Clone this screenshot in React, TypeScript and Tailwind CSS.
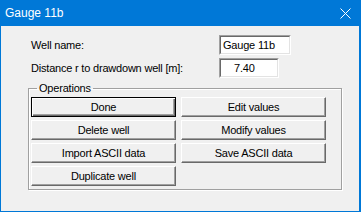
import React from 'react';

const font = { fontFamily: '"Liberation Sans", Arial, sans-serif' };

const Btn: React.FC<{ label: string; primary?: boolean }> = ({ label, primary }) => (
    <button
        className={
            primary
                ? 'h-[20px] w-full border border-black bg-[#f0f0f0] text-[11px] leading-none tracking-[-0.2px] text-black shadow-[inset_1px_1px_0_#fff,inset_-1px_-1px_0_#696969,inset_-2px_-2px_0_#a0a0a0]'
                : 'h-[20px] w-full border border-t-white border-l-white border-r-[#696969] border-b-[#696969] bg-[#f0f0f0] text-[11px] leading-none tracking-[-0.2px] text-black shadow-[inset_-1px_-1px_0_#a0a0a0]'
        }
    >
        {label}
    </button>
);

const Field: React.FC<{ value: string; w: string; pad: string }> = ({ value, w, pad }) => (
    <div className={`${w} h-[20px] border border-t-[#a0a0a0] border-l-[#a0a0a0] border-r-white border-b-white`}>
        <div className={`h-full border border-t-[#696969] border-l-[#696969] border-r-[#e3e3e3] border-b-[#e3e3e3] bg-white text-[11px] leading-[16px] text-black ${pad}`}>
            {value}
        </div>
    </div>
);

export default function App() {
    return (
        <div className="w-[361px] h-[212px] flex flex-col bg-[#0078d7] select-none" style={font}>
            {/* Title bar */}
            <div className="h-[26px] flex items-center justify-between pl-[5px] pr-[10px] text-white text-[12px]">
                <span>Gauge 11b</span>
                <svg width="11" height="11" viewBox="0 0 11 11" className="mt-[1px]">
                    <path d="M0.5 0.5 L10.5 10.5 M10.5 0.5 L0.5 10.5" stroke="white" strokeWidth="1" />
                </svg>
            </div>

            {/* Body */}
            <div className="flex-1 ml-[1px] mr-[2px] mb-[1px] bg-[#f0f0f0] pl-[30px] pr-[16px] pt-[9px] text-[11px] tracking-[-0.2px] text-black">
                <div className="flex items-center h-[20px]">
                    <span className="w-[188px] pt-[1px]">Well name:</span>
                    <Field value="Gauge 11b" w="w-[72px]" pad="pl-[2px]" />
                </div>
                <div className="flex items-center h-[20px] mt-[3px]">
                    <span className="w-[188px] pt-[1px]">Distance r to drawdown well [m]:</span>
                    <Field value="7.40" w="w-[60px]" pad="pl-[13px]" />
                </div>

                {/* Operations group */}
                <fieldset className="mt-[4px] -ml-[3px] w-[314px] h-[108px] border border-[#a0a0a0] shadow-[inset_1px_1px_0_#fff,1px_1px_0_#fff] px-[2px] pb-[2px]">
                    <legend className="ml-[6px] px-[2px] text-[11px] leading-[12px]">Operations</legend>
                    <div className="grid grid-cols-[145px_145px] gap-x-[5px] gap-y-[3px] mt-[3px]">
                        <Btn label="Done" primary />
                        <Btn label="Edit values" />
                        <Btn label="Delete well" />
                        <Btn label="Modify values" />
                        <Btn label="Import ASCII data" />
                        <Btn label="Save ASCII data" />
                        <Btn label="Duplicate well" />
                    </div>
                </fieldset>
            </div>
        </div>
    );
}
